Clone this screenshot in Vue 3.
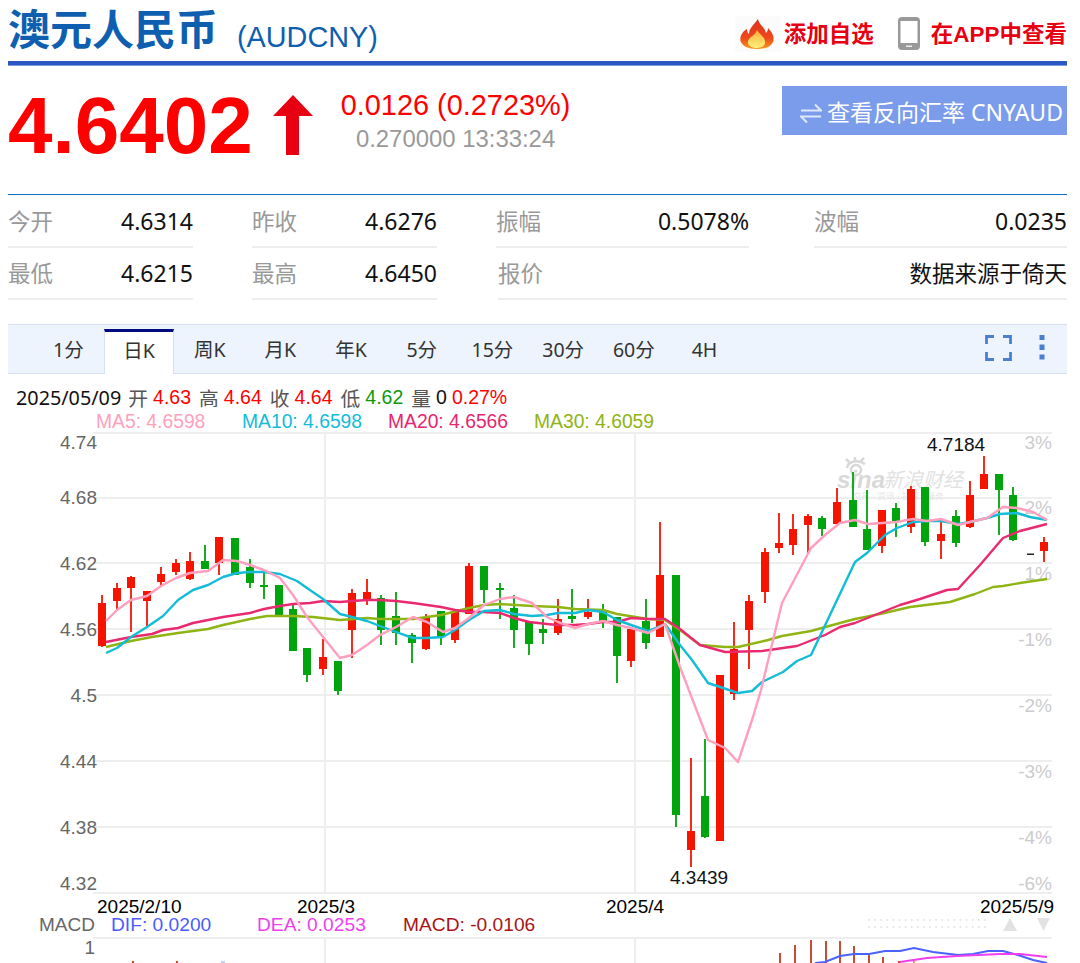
<script setup>
const R = '#f51400'
const G = '#00a40c'

// x, body top, body bottom, wick top, wick bottom, colour
const candles = [
  [102, 603, 646, 595, 647, R], [117, 588, 601, 583, 610, R], [131, 577, 588, 576, 632, R],
  [147, 591, 601, 591, 626, R], [161, 574, 582, 567, 587, R], [176, 563, 572, 559, 575, R],
  [190, 561, 579, 552, 580, R], [205, 561, 569, 545, 569, G], [219, 537, 563, 537, 575, R],
  [235, 538, 575, 538, 575, G], [250, 567, 583, 559, 588, G], [264, 585, 587, 572, 599, G],
  [279, 585, 616, 585, 616, G], [293, 609, 651, 605, 651, G], [307, 648, 675, 648, 682, G],
  [323, 657, 669, 639, 675, R], [338, 661, 691, 661, 695, G], [352, 593, 630, 589, 658, R],
  [367, 592, 600, 579, 605, R], [381, 598, 630, 595, 645, G], [396, 616, 633, 592, 645, G],
  [412, 635, 643, 633, 663, G], [426, 617, 649, 614, 650, R], [441, 611, 637, 611, 645, G],
  [455, 611, 640, 611, 643, R], [469, 566, 614, 563, 614, R], [484, 566, 590, 566, 603, G],
  [500, 588, 590, 583, 619, G], [514, 608, 630, 595, 648, G], [529, 622, 644, 622, 655, G],
  [543, 629, 633, 619, 644, G], [558, 619, 633, 599, 635, R], [572, 616, 619, 589, 623, G],
  [588, 612, 617, 599, 619, R], [603, 612, 623, 604, 628, G], [617, 617, 656, 617, 683, G],
  [631, 629, 661, 629, 667, R], [646, 621, 643, 599, 649, G], [660, 575, 637, 522, 637, R],
  [676, 575, 815, 575, 827, G], [691, 831, 850, 758, 867, R], [705, 796, 837, 739, 838, G],
  [720, 675, 841, 675, 841, R], [734, 649, 694, 622, 700, R], [749, 601, 630, 595, 669, R],
  [765, 552, 592, 548, 603, R], [779, 543, 548, 513, 553, R], [793, 529, 545, 514, 555, R],
  [808, 516, 525, 514, 553, R], [822, 518, 529, 516, 536, G], [837, 502, 524, 488, 524, R],
  [853, 500, 527, 472, 527, G], [867, 529, 550, 490, 550, G], [882, 510, 546, 510, 553, R],
  [896, 508, 521, 503, 537, G], [911, 489, 527, 486, 533, R], [925, 487, 542, 487, 546, G],
  [941, 534, 541, 518, 559, R], [956, 516, 543, 510, 547, G], [970, 495, 527, 481, 528, R],
  [984, 474, 489, 456, 489, R], [999, 474, 490, 474, 535, G], [1013, 495, 540, 487, 541, G],
  [1044, 542, 551, 537, 562, R]
]

const ma5 = '106,621 117,610 131,600 147,596 161,586 176,578 190,573 208,571 223,560 237,561 250,565 264,570 280,578 293,595 307,617 323,637 340,658 352,655 367,645 380,635 396,627 413,617 427,622 443,632 455,628 469,618 484,605 500,599 514,597 532,603 547,617 558,622 575,628 588,624 603,621 617,625 631,628 648,633 665,624 680,667 708,740 725,748 738,762 753,717 761,690 782,603 811,548 825,535 840,523 855,520 868,524 882,523 896,522 913,519 927,521 941,519 958,525 970,522 987,518 1003,507 1017,508 1033,512 1047,520'
const ma10 = '106,653 117,648 131,637 147,627 163,616 178,600 193,590 208,585 223,577 237,573 250,572 264,572 280,574 297,581 307,588 323,599 340,614 352,617 367,621 380,626 396,632 413,638 427,638 443,637 455,630 469,620 484,611 500,610 514,614 532,616 547,615 558,613 575,613 588,610 603,612 617,620 631,625 648,631 665,624 680,645 692,660 708,683 738,693 752,691 762,682 783,672 797,661 811,655 855,562 867,553 885,535 897,528 913,522 927,521 941,521 958,524 970,522 987,518 1000,514 1017,513 1030,517 1047,520'
const ma20 = '106,642 131,637 152,634 163,630 178,628 193,623 208,620 223,617 250,613 264,609 280,606 293,604 310,603 323,601 340,602 352,601 367,600 380,600 396,601 413,603 441,607 455,610 469,612 484,612 500,613 514,618 529,622 547,624 558,625 575,625 588,624 603,622 617,622 631,618 648,619 665,619 680,629 700,645 725,652 762,651 797,646 825,635 840,627 855,623 870,617 900,605 920,599 947,590 958,589 980,565 1003,538 1020,531 1047,524'
const ma30 = '106,647 131,641 152,637 178,633 208,629 223,625 250,619 267,616 293,616 313,617 340,620 367,618 380,619 413,619 441,615 469,608 484,605 500,604 532,606 558,607 575,609 603,610 617,614 648,619 665,620 680,630 700,645 725,647 738,647 768,640 782,636 811,631 840,623 855,619 880,614 910,607 950,602 975,594 993,587 1003,586 1020,583 1047,579'

const maLines = [
  { pts: ma30, color: '#8fb414' },
  { pts: ma20, color: '#ea2a70' },
  { pts: ma10, color: '#14bcd8' },
  { pts: ma5, color: '#ff9fbd' }
]

const gridY = [433, 498, 563, 629, 695, 761, 827, 893, 938]
const priceLabels = [['4.74', 449], ['4.68', 504], ['4.62', 570], ['4.56', 636], ['4.5', 702], ['4.44', 768], ['4.38', 834], ['4.32', 890]]
const pctLabels = [['3%', 449], ['2%', 514], ['1%', 580], ['-1%', 646], ['-2%', 712], ['-3%', 778], ['-4%', 844], ['-6%', 890]]

const tabs = ['1分', '日K', '周K', '月K', '年K', '5分', '15分', '30分', '60分', '4H']

const macdBars = [[780, 953], [795, 945], [811, 940], [826, 941], [840, 941], [854, 946], [869, 955], [883, 957], [899, 961]]
const dif = '815,963 825,962 840,956 854,954 869,954 885,951 900,951 914,948 933,952 958,955 973,954 988,951 1003,951 1018,955 1033,960 1047,963'
const dea = '900,962 927,958 957,956 1000,954 1020,954 1047,957'

const dots = []
for (let x = 869; x < 986; x += 6.1) {
  dots.push([x, 920], [x, 927])
}

const stats = [
  [
    { label: '今开', value: '4.6314', cls: 'w-s' },
    { label: '昨收', value: '4.6276', cls: 'w-s' },
    { label: '振幅', value: '0.5078%', cls: 'w-l' },
    { label: '波幅', value: '0.0235', cls: 'w-l' }
  ],
  [
    { label: '最低', value: '4.6215', cls: 'w-s' },
    { label: '最高', value: '4.6450', cls: 'w-s' },
    { label: '报价', value: '数据来源于倚天', cls: 'w-x' }
  ]
]
</script>

<template>
  <div class="page">
    <header class="head">
      <h1 class="title">澳元人民币</h1>
      <span class="code">(AUDCNY)</span>
      <div class="head-actions">
        <svg class="flame" width="46" height="36" viewBox="0 0 46 36">
          <defs>
            <linearGradient id="flameOuter" x1="0" y1="0" x2="0" y2="1">
              <stop offset="0" stop-color="#dc2f1e" />
              <stop offset="0.65" stop-color="#ee4a1c" />
              <stop offset="1" stop-color="#fb9a1e" />
            </linearGradient>
            <linearGradient id="flameInner" x1="0" y1="0" x2="0" y2="1">
              <stop offset="0" stop-color="#fbb13a" />
              <stop offset="1" stop-color="#fff07c" />
            </linearGradient>
          </defs>
          <rect width="46" height="36" fill="#fbfbfb" />
          <path d="M23 3C24 9 30 11 31 17C33 15 33 13 33 12C37 16 40 21 38 26C36 31 30 33 22 33C13 33 7 30 5.5 25C4.5 20 8 15 12 13C12 15 12.500 17 14 18C14 12 19 9 23 3Z" fill="url(#flameOuter)" />
          <path d="M22 14C24 18 29 20 30 25C31 30 26 32 22 32C17 32 12 30 13 25C14 21 20 20 22 14Z" fill="url(#flameInner)" />
        </svg>
        <span class="action">添加自选</span>
        <svg class="phone" width="22" height="33" viewBox="0 0 22 33">
          <rect width="22" height="33" rx="4" fill="#999" />
          <rect x="2.500" y="4" width="17" height="22" fill="#fff" />
          <rect x="8" y="28.500" width="6" height="1.500" fill="#eee" />
        </svg>
        <span class="action">在APP中查看</span>
      </div>
    </header>

    <section class="quote">
      <div class="price">4.6402</div>
      <svg class="up-arrow" width="40" height="60" viewBox="0 0 40 60">
        <path d="M20 0L40 21H26V60H13V21H0Z" fill="#e60012" />
      </svg>
      <div class="change">
        <div class="change-main">0.0126 (0.2723%)</div>
        <div class="change-sub">0.270000 13:33:24</div>
      </div>
      <div class="reverse">
        <svg class="swap" width="22" height="24" viewBox="0 0 22 24">
          <path d="M1 9.500H21L15 3.500M21 15.500H1L7 21.500" fill="none" stroke="#dfe7fb" stroke-width="2" />
        </svg>
        <span>查看反向汇率 CNYAUD</span>
      </div>
    </section>

    <section class="stats">
      <div v-for="(row, i) in stats" :key="i" class="stat-row">
        <div v-for="cell in row" :key="cell.label" class="stat" :class="cell.cls">
          <span class="stat-label">{{ cell.label }}</span>
          <span class="stat-value">{{ cell.value }}</span>
        </div>
      </div>
    </section>

    <nav class="tabs">
      <span v-for="t in tabs" :key="t" class="tab" :class="{ active: t === '日K' }">{{ t }}</span>
      <div class="tab-tools">
        <svg width="27" height="26" viewBox="0 0 27 26">
          <path d="M1.500 9V1.500H9M18 1.500H25.500V9M25.500 17V24.500H18M9 24.500H1.500V17" fill="none" stroke="#4a80d0" stroke-width="2.800" />
        </svg>
        <svg class="more" width="6" height="25" viewBox="0 0 6 25">
          <rect x="0.500" width="5" height="5" fill="#4a80d0" />
          <rect x="0.500" y="9.500" width="5" height="5.500" fill="#4a80d0" />
          <rect x="0.500" y="19.500" width="5" height="5" fill="#4a80d0" />
        </svg>
      </div>
    </nav>

    <div class="ohlc">
      <span class="ohlc-date">2025/05/09</span>
      <span>开</span><b class="up">4.63</b>
      <span>高</span><b class="up">4.64</b>
      <span>收</span><b class="up">4.64</b>
      <span>低</span><b class="down">4.62</b>
      <span>量</span><b class="vol">0</b><b class="up">0.27%</b>
    </div>
    <div class="ma-row">
      <span class="ma5">MA5: 4.6598</span>
      <span class="ma10">MA10: 4.6598</span>
      <span class="ma20">MA20: 4.6566</span>
      <span class="ma30">MA30: 4.6059</span>
    </div>

    <svg class="chart" width="1059" height="531" viewBox="8 432 1059 531">
      <line v-for="y in gridY" :key="y" x1="93" x2="1052" :y1="y" :y2="y" stroke="#eeeeee" stroke-width="2" />
      <g stroke="#eeeeee" stroke-width="2">
        <line x1="325" x2="325" y1="433" y2="893" />
        <line x1="635" x2="635" y1="433" y2="893" />
        <line x1="325" x2="325" y1="938" y2="963" />
        <line x1="635" x2="635" y1="938" y2="963" />
      </g>

      <!-- watermark -->
      <g class="wm">
        <g fill="none" stroke="#d8d8d8" stroke-width="2.500">
          <circle cx="856" cy="470" r="5" />
          <path d="M847 468C848 461 858 459 865 464M849 462L846 459M855 460L855 457M861 461L864 458" />
        </g>
        <text x="837" y="488" class="wm-sina">sina</text>
        <text x="883" y="487" class="wm-cn">新浪财经</text>
        <text x="853" y="499" class="wm-small">交易 · 资讯 · 投资 · 服务</text>
      </g>

      <text v-for="l in priceLabels" :key="l[0]" x="97" :y="l[1]" class="axis-left">{{ l[0] }}</text>
      <text v-for="l in pctLabels" :key="l[0]" x="1052" :y="l[1]" class="axis-right">{{ l[0] }}</text>

      <g v-for="c in candles" :key="c[0]">
        <rect :x="c[0] - 0.9" :y="c[3]" width="1.800" :height="c[4] - c[3]" :fill="c[5]" />
        <rect :x="c[0] - 4" :y="c[1]" width="8" :height="c[2] - c[1]" :fill="c[5]" />
      </g>

      <polyline v-for="m in maLines" :key="m.color" :points="m.pts" fill="none" :stroke="m.color" stroke-width="2.400" stroke-linejoin="round" />

      <rect x="1027" y="553.500" width="7" height="1.500" fill="#222" />
      <text x="927" y="451" class="peak">4.7184</text>
      <text x="670" y="884" class="peak">4.3439</text>

      <text x="97" y="913" class="date">2025/2/10</text>
      <text x="326" y="913" class="date mid">2025/3</text>
      <text x="635" y="913" class="date mid">2025/4</text>
      <text x="1054" y="913" class="date end">2025/5/9</text>

      <text x="95" y="931" class="axis-left">MACD</text>
      <text x="111" y="931" class="legend" fill="#4a5cff">DIF: 0.0200</text>
      <text x="257" y="931" class="legend" fill="#f03df0">DEA: 0.0253</text>
      <text x="403" y="931" class="legend" fill="#a81414">MACD: -0.0106</text>
      <text x="95" y="954" class="axis-left">1</text>

      <circle v-for="(d, i) in dots" :key="i" :cx="d[0]" :cy="d[1]" r="1.100" fill="#e6e6e6" />
      <path d="M1010 918L1017 931H1003Z" fill="#e2e2e2" />
      <path d="M1037 918H1050L1043.500 931Z" fill="#e2e2e2" />

      <rect v-for="b in macdBars" :key="b[0]" :x="b[0] - 0.8" :y="b[1]" width="1.600" :height="963 - b[1]" fill="#bb2200" />
      <rect x="913" y="961" width="1.600" height="2" fill="#e08a20" />
      <rect x="132" y="961" width="2" height="2" fill="#e04020" />
      <rect x="176" y="961" width="2" height="2" fill="#e04020" />
      <rect x="221" y="961" width="4" height="2" fill="#c9d0f5" />
      <polyline :points="dif" fill="none" stroke="#4a62ff" stroke-width="2" />
      <polyline :points="dea" fill="none" stroke="#f03df0" stroke-width="2" />
    </svg>
  </div>
</template>

<style>
html,
body {
  margin: 0;
  background: #fff;
  overflow: hidden;
}
</style>

<style scoped>
.page {
  width: 1059px;
  height: 963px;
  padding-left: 8px;
  font-family: 'Liberation Sans', 'Noto Sans CJK SC', sans-serif;
  overflow: hidden;
}

.head {
  height: 61px;
  display: flex;
  align-items: flex-start;
  border-bottom: 4px solid #2a57c4;
  box-shadow: 0 1px 0 #7b9be2;
}
.title {
  margin: 0;
  font-size: 42px;
  line-height: 61px;
  font-weight: bold;
  color: #0f5fb0;
}
.code {
  margin-left: 19px;
  font-size: 28.8px;
  line-height: 74px;
  color: #0f5fb0;
}
.head-actions {
  margin-left: auto;
  display: flex;
  align-items: center;
  margin-top: 14px;
}
.action {
  padding-top: 3px;
  font-size: 22.5px;
  line-height: 36px;
  font-weight: bold;
  color: #e60012;
  white-space: nowrap;
}
.flame {
  margin-right: 3px;
}
.phone {
  margin: 0 11px 0 24px;
}

.quote {
  height: 130px;
  display: flex;
  align-items: flex-start;
  border-bottom: 1px solid #0a6fc9;
  box-sizing: border-box;
}
.price {
  margin-top: 15px;
  font-size: 80px;
  line-height: 92px;
  font-weight: bold;
  color: #f00;
}
.up-arrow {
  margin: 30px 0 0 20px;
}
.change {
  margin: 22px 0 0 28px;
  display: flex;
  flex-direction: column;
  align-items: center;
}
.change-main {
  font-size: 28.9px;
  line-height: 36px;
  color: #f00;
}
.change-sub {
  font-size: 23.9px;
  line-height: 31px;
  color: #999;
}
.reverse {
  margin: 21px 0 0 auto;
  width: 285px;
  height: 49px;
  box-sizing: border-box;
  padding-left: 18px;
  display: flex;
  align-items: center;
  gap: 5px;
  background: #7a9cea;
  color: #fff;
  font-family: 'Noto Sans', 'Noto Sans CJK SC', sans-serif;
  font-size: 23px;
  white-space: nowrap;
}
.swap {
  margin-top: 4px;
  flex: none;
}

.stats {
  padding-top: 2px;
}
.stat-row {
  height: 52px;
  display: flex;
  gap: 59px;
}
.stat {
  box-sizing: border-box;
  display: flex;
  justify-content: space-between;
  align-items: center;
  height: 51px;
  padding-bottom: 2px;
  border-bottom: 2px solid #eeeeee;
  font-family: 'Noto Sans', 'Noto Sans CJK SC', sans-serif;
}
.w-s {
  width: 185px;
}
.w-l {
  width: 253px;
}
.w-l:last-child {
  margin-left: 6px;
}
.w-x {
  width: 569px;
  margin-left: 2px;
}
.w-x .stat-value {
  font-size: 22.5px;
}
.stat-label {
  font-size: 22.5px;
  color: #999;
}
.stat-value {
  font-size: 23px;
  color: #111;
}

.tabs {
  margin-top: 23px;
  height: 50px;
  box-sizing: border-box;
  display: flex;
  padding-left: 25px;
  background: #eef4fe;
  border-top: 1px solid #d5e0f3;
  border-bottom: 1px solid #d5e0f3;
}
.tab {
  width: 70.7px;
  box-sizing: border-box;
  text-align: center;
  font-family: 'Noto Sans', 'Noto Sans CJK SC', sans-serif;
  font-size: 19.5px;
  line-height: 50px;
  color: #333;
}
.tab.active {
  margin-top: 4px;
  margin-bottom: -1px;
  background: #fff;
  border-top: 3px solid #000a80;
  border-left: 1px solid #d5e0f3;
  border-right: 1px solid #d5e0f3;
  line-height: 38px;
}
.tab-tools {
  margin-left: auto;
  padding: 10px 22px 0 0;
  display: flex;
  align-items: flex-start;
}
.more {
  margin-left: 27px;
}

.ohlc {
  margin-top: 9px;
  padding-left: 8px;
  height: 28px;
  display: flex;
  align-items: center;
  gap: 5px;
  font-family: 'Noto Sans', 'Noto Sans CJK SC', sans-serif;
  font-size: 19.8px;
  color: #555;
}
.ohlc b {
  font-family: 'Liberation Sans', sans-serif;
  font-size: 19.5px;
  font-weight: normal;
  margin-right: 3px;
}
.ohlc-date {
  color: #111;
  margin-right: 2px;
}
.up {
  color: #f00;
}
.down {
  color: #0a9a0a;
}
.ohlc .vol {
  color: #111;
  margin-right: 0;
}
.ma-row {
  height: 21px;
  display: flex;
  padding-left: 88px;
  font-size: 19.3px;
  line-height: 22px;
}
.ma-row span {
  width: 146px;
  white-space: nowrap;
}
.ma5 {
  color: #ff9fbd;
}
.ma10 {
  color: #14bcd8;
}
.ma20 {
  color: #e8266e;
}
.ma30 {
  color: #8fb414;
}

.chart {
  display: block;
  font-family: 'Liberation Sans', 'Noto Sans CJK SC', sans-serif;
}
.axis-left {
  font-size: 19px;
  fill: #666;
  text-anchor: end;
}
.axis-right {
  font-size: 19px;
  fill: #ccc;
  text-anchor: end;
}
.peak {
  font-size: 19px;
  fill: #111;
}
.date {
  font-size: 19px;
  fill: #000;
}
.date.mid {
  text-anchor: middle;
}
.date.end {
  text-anchor: end;
}
.legend {
  font-size: 19.2px;
}
.wm-sina {
  font-size: 24px;
  font-weight: bold;
  font-style: italic;
  fill: #d9d9d9;
}
.wm-cn {
  font-size: 20px;
  font-style: italic;
  fill: #e2e2e2;
}
.wm-small {
  font-size: 8.500px;
  fill: #e6e6e6;
}
</style>
